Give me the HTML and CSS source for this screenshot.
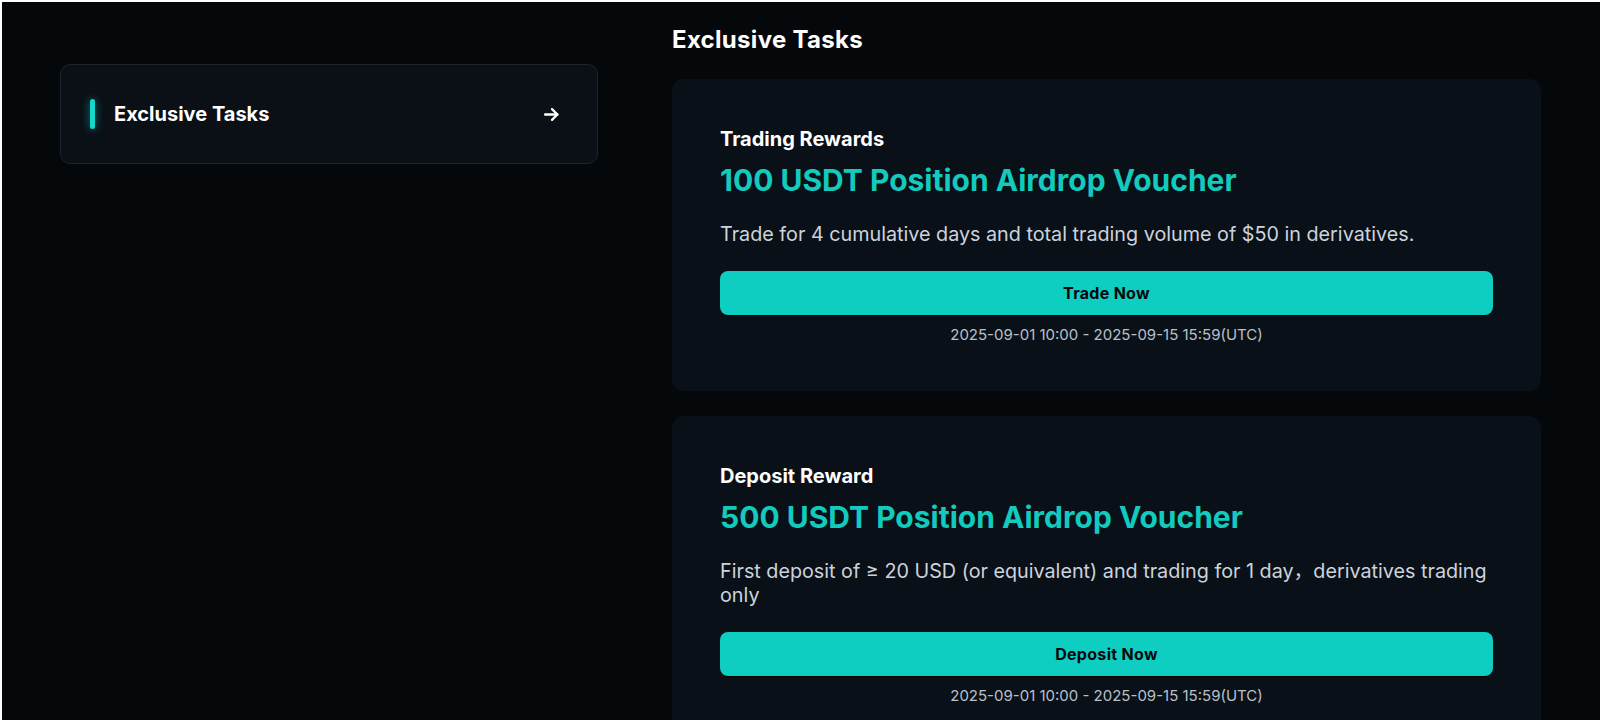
FILE: index.html
```html
<!DOCTYPE html>
<html lang="en">
<head>
<meta charset="utf-8">
<title>Exclusive Tasks</title>
<link rel="stylesheet" href="styles.css">
</head>
<body>
<div class="layout">
  <aside class="sidebar">
    <div class="nav-item">
      <span class="nav-bar"></span>
      <span class="nav-text">Exclusive Tasks</span>
      <svg class="nav-arrow" width="17" height="17" viewBox="0 0 16 16" fill="none" stroke="#ffffff" stroke-width="2.2" stroke-linecap="round" stroke-linejoin="round"><path d="M2 8h11.5"/><path d="M8.5 3l5 5-5 5"/></svg>
    </div>
  </aside>
  <main class="main">
    <h1 class="page-title">Exclusive Tasks</h1>
    <section class="task">
      <div class="task-label">Trading Rewards</div>
      <div class="task-title">100 USDT Position Airdrop Voucher</div>
      <p class="task-desc">Trade for 4 cumulative days and total trading volume of $50 in derivatives.</p>
      <button class="task-btn">Trade Now</button>
      <div class="task-date">2025-09-01 10:00 - 2025-09-15 15:59(UTC)</div>
    </section>
    <section class="task">
      <div class="task-label">Deposit Reward</div>
      <div class="task-title">500 USDT Position Airdrop Voucher</div>
      <p class="task-desc">First deposit of ≥ 20 USD (or equivalent) and trading for 1 day，derivatives trading only</p>
      <button class="task-btn">Deposit Now</button>
      <div class="task-date">2025-09-01 10:00 - 2025-09-15 15:59(UTC)</div>
    </section>
  </main>
</div>
</body>
</html>
```
FILE: styles.css
```css
html {
  background: #ffffff;
}
body {
  margin: 2px 0 0 2px;
  min-height: calc(100vh - 2px);
  background: #05080b;
  font-family: Inter, "Noto Sans", "Noto Sans CJK SC", sans-serif;
  color: #ffffff;
  overflow: hidden;
}
.layout {
  display: flex;
  align-items: flex-start;
  padding: 22px 0 0 58px;
}
.sidebar {
  width: 538px;
  flex: none;
  margin-top: 40px;
}
.nav-item {
  box-sizing: border-box;
  height: 100px;
  display: flex;
  align-items: center;
  padding: 0 37px 0 29px;
  background: #0a1016;
  border: 1px solid #1c252e;
  border-radius: 10px;
}
.nav-bar {
  width: 5px;
  height: 30px;
  border-radius: 3px;
  background: #14d8cc;
  box-shadow: 0 0 8px rgba(20, 216, 204, 0.55);
  flex: none;
}
.nav-text {
  margin-left: 19px;
  font-size: 20px;
  font-weight: 700;
  line-height: 26px;
  flex: 1;
}
.nav-arrow {
  flex: none;
}
.main {
  margin-left: 74px;
  width: 869px;
  flex: none;
}
.page-title {
  margin: 0;
  font-size: 24px;
  line-height: 32px;
  font-weight: 700;
  letter-spacing: 0.3px;
}
.task {
  margin-top: 23px;
  background: #0a1017;
  border-radius: 12px;
  padding: 48px 48px 46px;
}
.task + .task {
  margin-top: 25px;
}
.task-label {
  font-size: 20px;
  line-height: 24px;
  font-weight: 700;
}
.task-title {
  margin-top: 10px;
  font-size: 30px;
  line-height: 38px;
  font-weight: 700;
  color: #12cabd;
}
.task-desc {
  margin: 23px 0 0;
  font-size: 19.75px;
  line-height: 24px;
  color: #ccd3dc;
}
.task-btn {
  display: block;
  width: 100%;
  height: 44px;
  margin-top: 25px;
  border: none;
  border-radius: 8px;
  background: #0ecdc1;
  box-shadow: 0 1px 0 #000000;
  font-family: Inter, "Noto Sans", sans-serif;
  font-size: 16px;
  font-weight: 700;
  letter-spacing: 0.3px;
  color: #05080b;
}
.task-date {
  margin-top: 10px;
  text-align: center;
  font-size: 15px;
  line-height: 20px;
  color: #b8c0c9;
}
```
